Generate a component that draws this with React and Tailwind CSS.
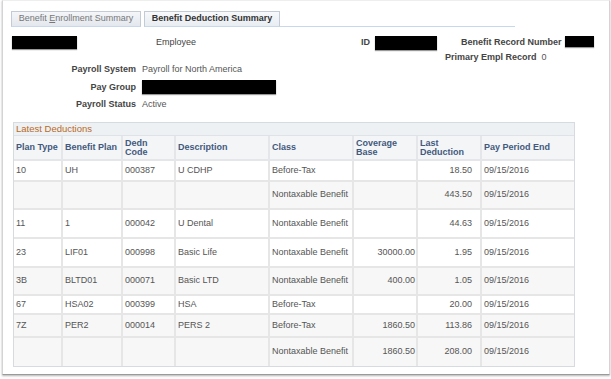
import React from 'react';

const cols = [
  { key: 'type', label: ['Plan Type'], w: 'w-[49px]' },
  { key: 'plan', label: ['Benefit Plan'], w: 'w-[60px]' },
  { key: 'code', label: ['Dedn', 'Code'], w: 'w-[53px]' },
  { key: 'desc', label: ['Description'], w: 'w-[94px]' },
  { key: 'cls', label: ['Class'], w: 'w-[84px]' },
  { key: 'base', label: ['Coverage', 'Base'], w: 'w-[64px]' },
  { key: 'last', label: ['Last', 'Deduction'], w: 'w-[64px]' },
  { key: 'end', label: ['Pay Period End'], w: 'w-[92px]' },
];

// shaded rows follow the reference, not a strict alternation
const rows = [
  { h: 'h-[21px]', shade: false, type: '10', plan: 'UH', code: '000387', desc: 'U CDHP', cls: 'Before-Tax', base: '', last: '18.50', end: '09/15/2016' },
  { h: 'h-[28px]', shade: true, type: '', plan: '', code: '', desc: '', cls: 'Nontaxable Benefit', base: '', last: '443.50', end: '09/15/2016' },
  { h: 'h-[29px]', shade: false, type: '11', plan: '1', code: '000042', desc: 'U Dental', cls: 'Nontaxable Benefit', base: '', last: '44.63', end: '09/15/2016' },
  { h: 'h-[29px]', shade: false, type: '23', plan: 'LIF01', code: '000998', desc: 'Basic Life', cls: 'Nontaxable Benefit', base: '30000.00', last: '1.95', end: '09/15/2016' },
  { h: 'h-[28px]', shade: true, type: '3B', plan: 'BLTD01', code: '000071', desc: 'Basic LTD', cls: 'Nontaxable Benefit', base: '400.00', last: '1.05', end: '09/15/2016' },
  { h: 'h-[19px]', shade: false, type: '67', plan: 'HSA02', code: '000399', desc: 'HSA', cls: 'Before-Tax', base: '', last: '20.00', end: '09/15/2016' },
  { h: 'h-[23px]', shade: true, type: '7Z', plan: 'PER2', code: '000014', desc: 'PERS 2', cls: 'Before-Tax', base: '1860.50', last: '113.86', end: '09/15/2016' },
  { h: 'h-[28px]', shade: true, type: '', plan: '', code: '', desc: '', cls: 'Nontaxable Benefit', base: '1860.50', last: '208.00', end: '09/15/2016' },
];

function Redacted({ className }) {
  return <div className={`bg-black shadow-[0_1px_1px_rgba(0,0,0,0.4)] ${className}`} />;
}

export default function App() {
  return (
    <div className="w-[611px] h-[379px] bg-white font-['Liberation_Sans',Arial,sans-serif] text-[9px] text-[#555]">
      <div className="ml-[2px] w-[608px] h-[375px] border border-[#d4d4d4] border-t-[#eeeeee] border-b-[#9a9a9a] shadow-[0_1px_2px_rgba(0,0,0,0.3)]">
        {/* tabs */}
        <div className="flex items-end pt-[10px] pl-[8px]">
          <div className="w-[130px] h-[16px] flex items-center justify-center border border-[#c3ccd6] border-b-[#c8d8ea] bg-gradient-to-b from-[#f4f6f9] to-[#e3e8ee] text-[#777]">
            <span>Benefit <span className="underline">E</span>nrollment Summary</span>
          </div>
          <div className="ml-[3px] w-[136px] h-[16px] flex items-center justify-center border border-[#c3ccd6] border-b-[#c8d8ea] bg-gradient-to-b from-[#f7f9fb] to-[#e8edf2] font-bold text-[#333]">
            Benefit Deduction Summary
          </div>
          <div className="w-[235px] border-b border-[#c8d8ea]" />
        </div>

        {/* employee row */}
        <div className="flex items-center h-[15px] mt-[8px] leading-[15px]">
          <Redacted className="ml-[9px] w-[65px] h-[13px] -mt-[1px]" />
          <span className="ml-[79px] text-[#444]">Employee</span>
          <span className="ml-[165px] font-bold text-[#444]">ID</span>
          <Redacted className="ml-[5px] w-[62px] h-[14px]" />
          <span className="ml-[24px] font-bold text-[#444]">Benefit Record Number</span>
          <Redacted className="ml-[3px] w-[29px] h-[11px] -mt-[3px]" />
        </div>
        <div className="flex h-[12px] mt-[1px] leading-[12px]">
          <span className="ml-[442px] font-bold text-[#444]">Primary Empl Record</span>
          <span className="ml-[5px]">0</span>
        </div>

        <div className="flex h-[12px] leading-[12px]">
          <span className="w-[133px] text-right font-bold text-[#444]">Payroll System</span>
          <span className="ml-[6px]">Payroll for North America</span>
        </div>
        <div className="flex items-center h-[14px] mt-[5px] leading-[14px]">
          <span className="w-[133px] text-right font-bold text-[#444]">Pay Group</span>
          <Redacted className="ml-[6px] w-[134px] h-[14px]" />
        </div>
        <div className="flex h-[12px] mt-[4px] leading-[12px]">
          <span className="w-[133px] text-right font-bold text-[#444]">Payroll Status</span>
          <span className="ml-[6px]">Active</span>
        </div>

        {/* table */}
        <div className="ml-[10px] mt-[12px] w-[562px] border border-[#d6dbe0]">
          <div className="h-[13px] bg-[#eef1f4] border-b border-[#dfe3e8] pl-[2px] text-[9.5px] leading-[12px] text-[#b8691f]">
            Latest Deductions
          </div>
          <div className="flex h-[25px] bg-[#f3f5f7] border-b-2 border-[#e4e6e9]">
            {cols.map((c, i) => (
              <div
                key={c.key}
                className={`${c.w} flex flex-col justify-center pl-[2px] font-bold text-[#43597d] leading-[9px] ${i < cols.length - 1 ? 'border-r-2 border-[#e4e6e9]' : ''}`}
              >
                {c.label.map((l) => (
                  <span key={l}>{l}</span>
                ))}
              </div>
            ))}
          </div>
          {rows.map((r, ri) => (
            <div
              key={ri}
              className={`flex ${r.h} ${r.shade ? 'bg-[#f7f7f7]' : 'bg-white'} ${ri < rows.length - 1 ? 'border-b-2 border-[#e6e6e6]' : ''}`}
            >
              {cols.map((c, i) => (
                <div
                  key={c.key}
                  className={`${c.w} flex items-center ${
                    c.key === 'base' ? 'justify-end pr-[1px]' : c.key === 'last' ? 'justify-end pr-[8px]' : 'pl-[2px]'
                  } ${i < cols.length - 1 ? 'border-r-2 border-[#e6e6e6]' : ''}`}
                >
                  {r[c.key]}
                </div>
              ))}
            </div>
          ))}
        </div>
      </div>
    </div>
  );
}
